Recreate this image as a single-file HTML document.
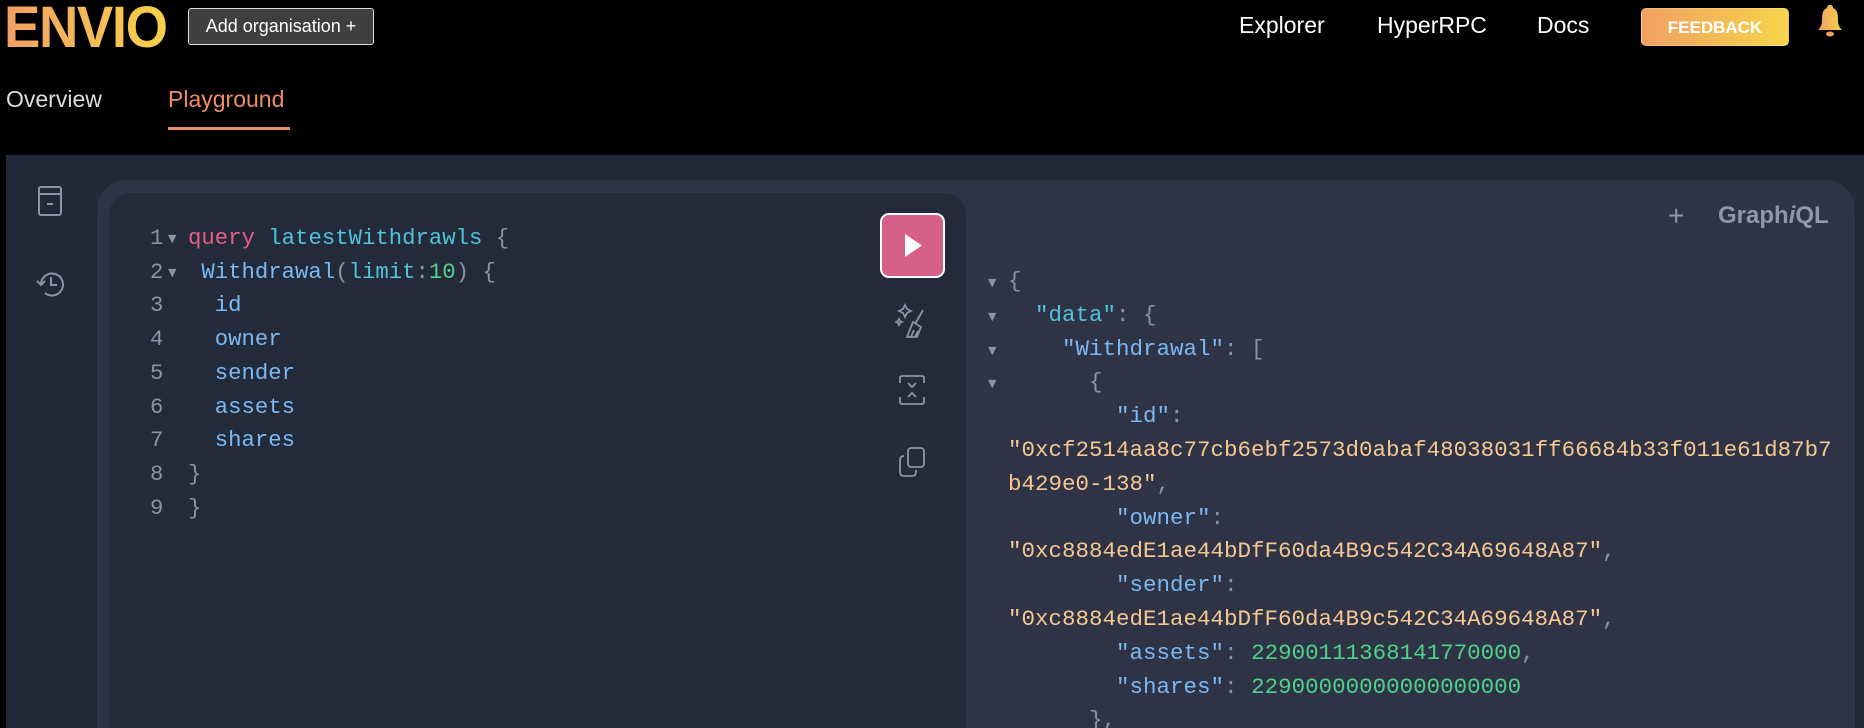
<!DOCTYPE html>
<html><head><meta charset="utf-8"><style>
*{margin:0;padding:0;box-sizing:border-box}
html,body{width:1864px;height:728px;overflow:hidden}
body{background:#000;position:relative;font-family:"Liberation Sans",sans-serif}
.a{position:absolute}
.logo{left:4px;top:-6px;font-size:58px;font-weight:bold;letter-spacing:-1.5px;background:linear-gradient(90deg,#f2a063,#f6d24b);-webkit-background-clip:text;color:transparent;transform:scaleX(0.94);transform-origin:left}
.addorg{left:188px;top:8px;width:186px;height:37px;background:#3f3f3f;border:1.5px solid #ddd;border-radius:3px;color:#fff;font-size:18px;line-height:34px;text-align:center}
.nav{color:#fff;font-size:23px;top:12px}
.fb{left:1641px;top:8px;width:148px;height:38px;border-radius:5px;background:linear-gradient(90deg,#f2a063,#f6d54b);border:1px solid #fff3;color:#fff;font-weight:bold;font-size:17px;text-align:center;line-height:37px}
.tab{top:86px;font-size:23px}
.main{left:6px;top:155px;width:1858px;height:573px;background:#232838;overflow:hidden}
.outer{left:91px;top:25px;width:1758px;height:560px;background:#2e3446;border-radius:30px 30px 0 0}
.editor{left:103px;top:38px;width:857px;height:540px;background:#232a3a;border-radius:22px 22px 0 0}
.mono{font-family:"Liberation Mono",monospace;font-size:22.3px;white-space:pre;line-height:33.7px}
.p,.ln{color:#8b93a6}
.pk{color:#e45e8c}.cy{color:#4fc3d9}.bl{color:#7cb8f2}.gr{color:#4fd18a}.or{color:#f6c793}
.arr{font-family:"DejaVu Sans",sans-serif;font-size:11px;color:#8b93a6;position:absolute}
.play{left:880px;top:213px;width:65px;height:65px;background:#d6608a;border:2px solid #fff;border-radius:9px}
</style></head><body>
<div class="a logo">ENVIO</div>
<div class="a addorg">Add organisation +</div>
<div class="a nav" style="left:1239px">Explorer</div>
<div class="a nav" style="left:1377px">HyperRPC</div>
<div class="a nav" style="left:1537px">Docs</div>
<div class="a fb">FEEDBACK</div>
<svg class="a" style="left:1816px;top:3px" width="28" height="36" viewBox="0 0 28 36"><defs><linearGradient id="g" x1="0" x2="1"><stop offset="0" stop-color="#f2a063"/><stop offset="1" stop-color="#f6d24b"/></linearGradient></defs><path d="M14 2c-2 0-3 1-3 3C6 7 6 12 6 18c0 4-2 7-4 9h24c-2-2-4-5-4-9 0-6 0-11-5-13 0-2-1-3-3-3z" fill="url(#g)"/><ellipse cx="14" cy="31" rx="4" ry="2.5" fill="#f2a063"/></svg>
<div class="a tab" style="left:6px;color:#ddd">Overview</div>
<div class="a tab" style="left:168px;color:#f08a68">Playground</div>
<div class="a" style="left:168px;top:127px;width:122px;height:3px;background:#f08a68"></div>
<div class="a main"><div class="a outer"></div><div class="a editor"></div></div>
<svg class="a" style="left:36px;top:184px" width="28" height="34" viewBox="0 0 28 34" fill="none" stroke="#8b93a6" stroke-width="2"><rect x="3" y="3" width="22" height="28" rx="2"/><path d="M3 10h22M11 20h6"/></svg>
<svg class="a" style="left:34px;top:268px" width="34" height="32" viewBox="0 0 34 32" fill="none" stroke="#8b93a6" stroke-width="2"><path d="M7 16a11 11 0 1 1 4 9"/><path d="M3 13l4 4 4-4M17 9v8h6"/></svg>
<div class="a mono ln" style="left:150px;top:222px">1
2
3
4
5
6
7
8
9</div>
<div class="arr" style="left:168px;top:232px">▼</div>
<div class="arr" style="left:168px;top:266px">▼</div>
<div class="a mono" style="left:188px;top:222px"><span class="pk">query</span> <span class="cy">latestWithdrawls</span> <span class="p">{</span>
 <span class="bl">Withdrawal</span><span class="p">(</span><span class="cy">limit</span><span class="p">:</span><span class="gr">10</span><span class="p">) {</span>
  <span class="bl">id</span>
  <span class="bl">owner</span>
  <span class="bl">sender</span>
  <span class="bl">assets</span>
  <span class="bl">shares</span>
<span class="p">}</span>
<span class="p">}</span></div>
<div class="a play"><svg width="61" height="61" viewBox="0 0 61 61"><path d="M23 19l17 11.5L23 42z" fill="#fff"/></svg></div>
<svg class="a" style="left:895px;top:302px" width="34" height="36" viewBox="0 0 34 36" fill="none" stroke="#8b93a6" stroke-width="1.8"><path d="M10 3l2 4 4 2-4 2-2 4-2-4-4-2 4-2zM4 17l1 2 2 1-2 1-1 2-1-2-2-1 2-1z"/><path d="M28 8l-8 14M18 20l8 5-4 10H12zM16 35l3-7M20 35l3-6"/></svg>
<svg class="a" style="left:897px;top:373px" width="30" height="34" viewBox="0 0 30 34" fill="none" stroke="#8b93a6" stroke-width="1.8"><path d="M3 10V5q0-2 2-2h20q2 0 2 2v5M3 24v5q0 2 2 2h20q2 0 2-2v-5M11 10l4 4 4-4M11 24l4-4 4 4"/></svg>
<svg class="a" style="left:897px;top:445px" width="30" height="34" viewBox="0 0 30 34" fill="none" stroke="#8b93a6" stroke-width="1.8"><rect x="11" y="3" width="16" height="19" rx="3"/><path d="M7 11q-4 0-4 4v12q0 4 4 4h8q4 0 4-4v-2"/></svg>
<div class="a" style="left:1668px;top:200px;color:#8f97aa;font-size:28px">+</div>
<div class="a" style="left:1718px;top:202px;color:#8f97aa;font-size:24px;font-weight:bold">Graph<i>i</i>QL</div>
<div class="arr" style="left:988px;top:276px">▼</div>
<div class="arr" style="left:988px;top:310px">▼</div>
<div class="arr" style="left:988px;top:344px">▼</div>
<div class="arr" style="left:988px;top:377px">▼</div>
<div class="a mono" style="left:1008px;top:265px;font-size:22.5px;line-height:33.8px"><span class="p">{</span>
  <span class="cy">"data"</span><span class="p">: {</span>
    <span class="bl">"Withdrawal"</span><span class="p">: [</span>
      <span class="p">{</span>
        <span class="bl">"id"</span><span class="p">:</span>
<span class="or">"0xcf2514aa8c77cb6ebf2573d0abaf48038031ff66684b33f011e61d87b7</span>
<span class="or">b429e0-138"</span><span class="p">,</span>
        <span class="bl">"owner"</span><span class="p">:</span>
<span class="or">"0xc8884edE1ae44bDfF60da4B9c542C34A69648A87"</span><span class="p">,</span>
        <span class="bl">"sender"</span><span class="p">:</span>
<span class="or">"0xc8884edE1ae44bDfF60da4B9c542C34A69648A87"</span><span class="p">,</span>
        <span class="bl">"assets"</span><span class="p">:</span> <span class="gr">22900111368141770000</span><span class="p">,</span>
        <span class="bl">"shares"</span><span class="p">:</span> <span class="gr">22900000000000000000</span>
      <span class="p">},</span></div>
</body></html>
